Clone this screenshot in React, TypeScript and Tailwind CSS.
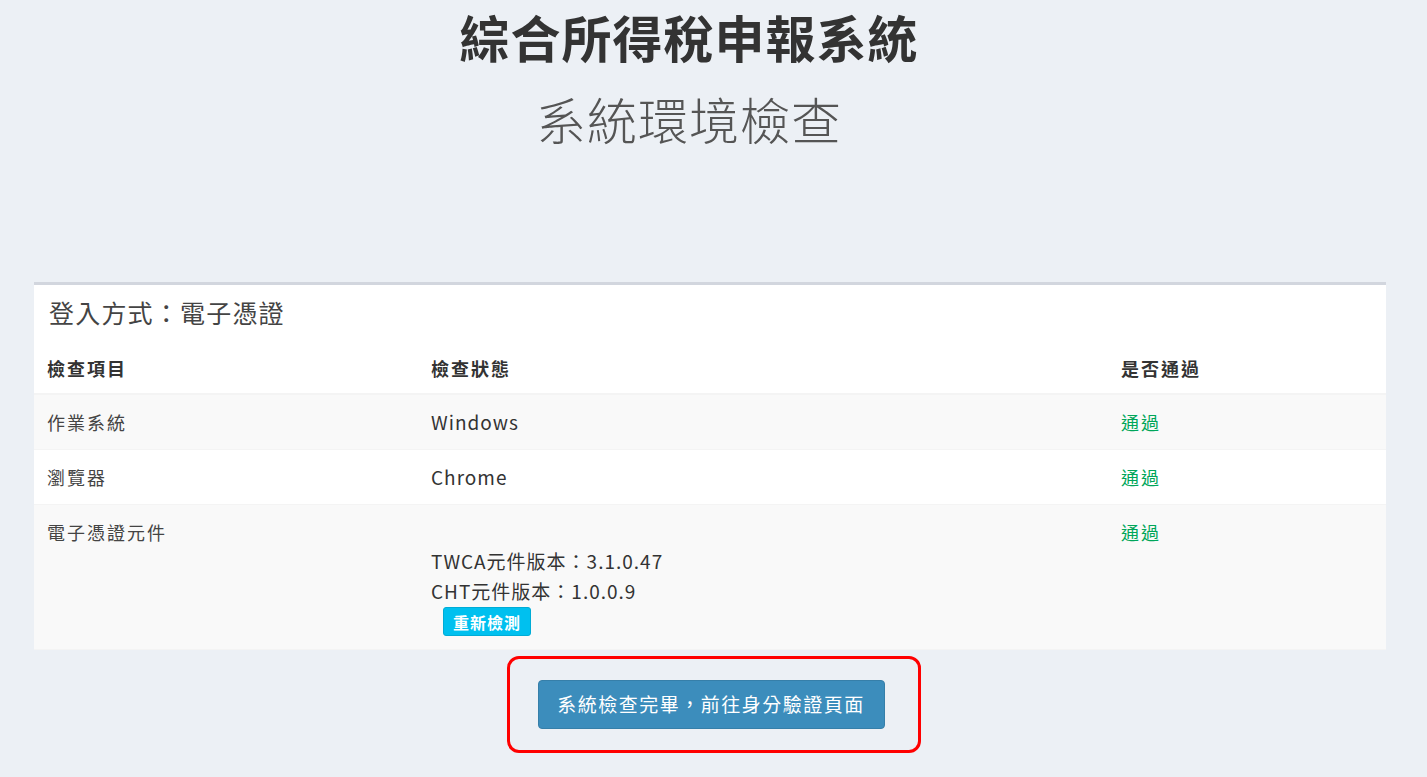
import React from 'react';

const font = { fontFamily: '"Noto Sans CJK TC", "Noto Sans", sans-serif' };

type Row = { item: string; status: React.ReactNode; pass: string; striped: boolean };

export default function App() {
    const rows: Row[] = [
        { item: '作業系統', status: 'Windows', pass: '通過', striped: true },
        { item: '瀏覽器', status: 'Chrome', pass: '通過', striped: false },
        {
            item: '電子憑證元件',
            status: (
                <div>
                    <div className="h-[28px]"></div>
                    <div className="leading-[30px]">TWCA元件版本：3.1.0.47</div>
                    <div className="leading-[30px]">CHT元件版本：1.0.0.9</div>
                    <button className="ml-[12px] mt-[1px] h-[29px] w-[88px] rounded-[3px] bg-[#00c0ef] border border-[#00acd6] text-white text-[16px] font-bold leading-none tracking-[1px]">
                        重新檢測
                    </button>
                </div>
            ),
            pass: '通過',
            striped: true,
        },
    ];

    return (
        <div className="min-h-[777px] bg-[#ecf0f5] pb-[24px]" style={font}>
            <div className="flex flex-col items-center pr-[49px] pt-[8px]">
                <h1 className="text-[50px] font-bold leading-[56px] text-[#333] tracking-[1px]">綜合所得稅申報系統</h1>
                <h2 className="mt-[26px] text-[50px] font-light leading-[56px] text-[#555] tracking-[1px]">系統環境檢查</h2>
            </div>

            <div className="ml-[34px] mr-[41px] mt-[136px] bg-white border-t-[3px] border-[#d2d6de]">
                <div className="pl-[15px] pt-[11px] pb-[17px] text-[25px] leading-[32px] tracking-[1.2px] text-[#444]">登入方式：電子憑證</div>
                <div className="grid grid-cols-[384px_690px_1fr] h-[50px] pb-[2px] items-center border-b-2 border-[#f4f4f4] text-[18px] font-bold tracking-[2px] text-[#333]">
                    <div className="pl-[13px]">檢查項目</div>
                    <div className="pl-[13px]">檢查狀態</div>
                    <div className="pl-[13px]">是否通過</div>
                </div>
                {rows.map((r, i) => (
                    <div
                        key={i}
                        className={`grid grid-cols-[384px_690px_1fr] border-b border-[#f4f4f4] py-[13px] text-[18px] leading-[28px] text-[#333] ${r.striped ? 'bg-[#f9f9f9]' : 'bg-white'}`}
                    >
                        <div className="pl-[13px] text-[#444] tracking-[2px]">{r.item}</div>
                        <div className="pl-[13px] text-[19px] tracking-[1px]">{r.status}</div>
                        <div className="pl-[13px] text-[#00a65a] tracking-[2px]">{r.pass}</div>
                    </div>
                ))}
            </div>

            <div className="flex justify-center mt-[6px]">
                <div className="w-[414px] h-[97px] pr-[5px] border-[3px] border-[#ff0000] rounded-[12px] flex items-center justify-center">
                    <button className="w-[347px] h-[49px] rounded-[4px] bg-[#3c8dbc] border border-[#367fa9] text-white text-[19px] tracking-[1.5px]">
                        系統檢查完畢，前往身分驗證頁面
                    </button>
                </div>
            </div>
        </div>
    );
}
